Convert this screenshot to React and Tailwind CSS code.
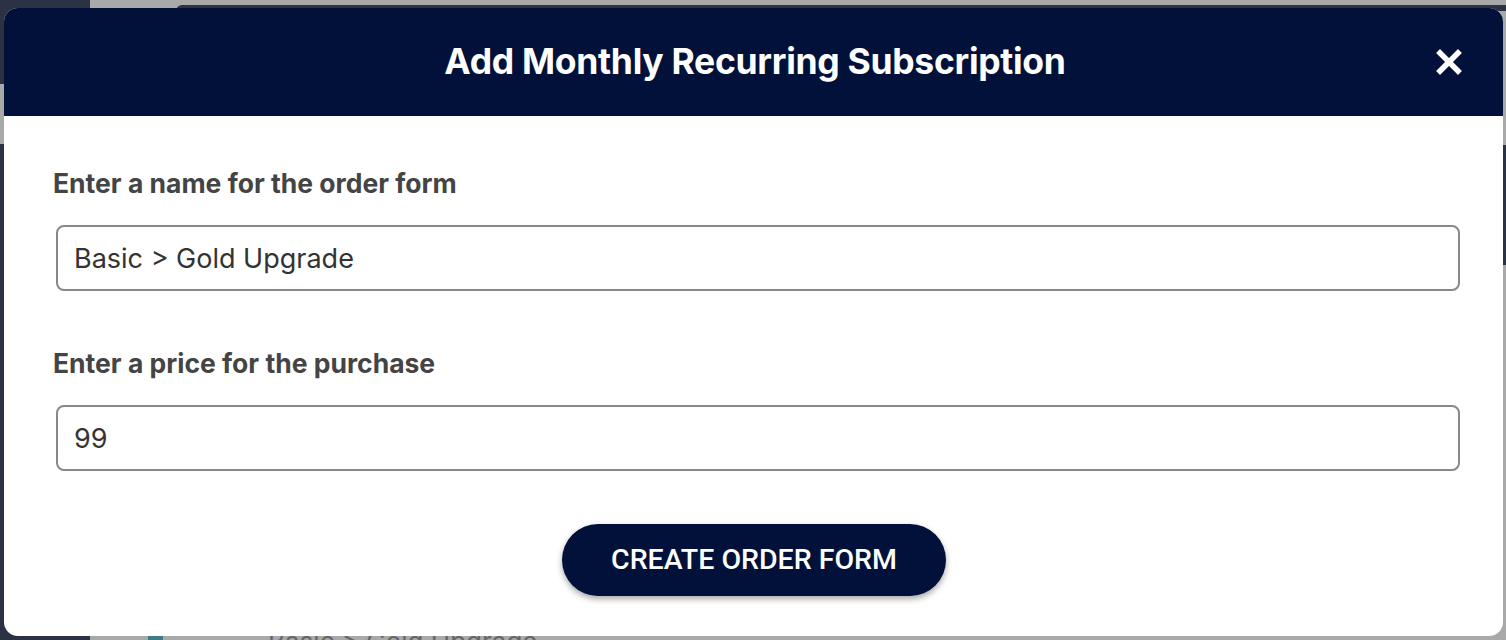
import React, { useState } from "react";

const CloseIcon = () => (
  <svg width="26" height="26" viewBox="0 0 26 26" fill="none">
    <path
      d="M4 4L22 22M22 4L4 22"
      stroke="white"
      strokeWidth="5.5"
      strokeLinecap="square"
    />
  </svg>
);

const App = () => {
  const [name, setName] = useState("Basic > Gold Upgrade");
  const [price, setPrice] = useState("99");

  return (
    <div className="relative w-[1506px] h-[640px] overflow-hidden bg-[#a9a9a9] font-['Inter',sans-serif]">
      {/* page behind the overlay */}
      <div className="absolute left-0 top-0 w-[90px] h-full bg-[#2b3243]">
        <div className="mt-[84px] h-[60px] bg-[#a9a9a9]"></div>
      </div>
      <div className="absolute left-[176px] top-[5px] right-0 h-[6px] rounded-tl-[10px] bg-[#2b3243]"></div>
      <div className="absolute right-0 top-[145px] w-[6px] h-[120px] bg-[#2b3243]"></div>
      <div className="absolute left-[148px] top-[634px] flex items-center gap-[25px]">
        <div className="w-[15px] h-[16px] bg-[#3d7c86]"></div>
        <div className="w-[20px] h-[3px] bg-[#555]"></div>
        <span className="text-[26px] text-[#666] leading-[16px] ml-[35px]">
          Basic &gt; Gold Upgrade
        </span>
      </div>

      {/* Modal */}
      <div className="absolute left-[4px] top-[8px] w-[1499px] h-[628px] rounded-[14px] bg-white overflow-hidden flex flex-col">
        <div className="relative h-[108px] bg-[#011139] flex items-center justify-center">
          <h1 className="text-[35.5px] font-bold text-white tracking-[-0.3px] pl-[3px]">
            Add Monthly Recurring Subscription
          </h1>
          <button className="absolute right-[41px] top-[41px]">
            <CloseIcon />
          </button>
        </div>

        <div className="flex flex-col pl-[49px] pr-[48px] pt-[52px]">
          <label className="text-[26.5px] font-bold text-[#444] leading-[30px]">
            Enter a name for the order form
          </label>
          <input
            value={name}
            onChange={(e) => setName(e.target.value)}
            className="mt-[27px] ml-[3px] h-[66px] w-[1404px] rounded-[8px] border-2 border-[#888] px-[16px] text-[27px] text-[#333] outline-none"
          />

          <label className="mt-[57px] text-[26.5px] font-bold text-[#444] leading-[30px]">
            Enter a price for the purchase
          </label>
          <input
            value={price}
            onChange={(e) => setPrice(e.target.value)}
            className="mt-[27px] ml-[3px] h-[66px] w-[1404px] rounded-[8px] border-2 border-[#888] px-[16px] text-[27px] text-[#333] outline-none"
          />

          <div className="flex justify-center mt-[53px]">
            <button className="w-[384px] h-[72px] rounded-full bg-[#011139] text-white text-[28.5px] font-medium font-['Roboto',sans-serif] shadow-[0_3px_6px_rgba(0,0,0,0.35)]">
              CREATE ORDER FORM
            </button>
          </div>
        </div>
      </div>
    </div>
  );
};

export default App;
